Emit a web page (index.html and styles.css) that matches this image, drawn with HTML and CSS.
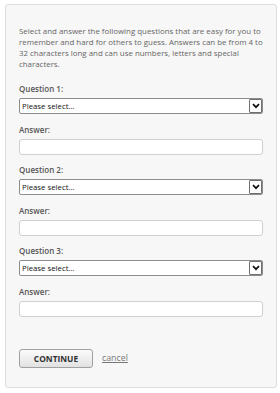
FILE: index.html
```html
<!DOCTYPE html>
<html lang="en">
<head>
  <meta charset="UTF-8">
  <title>Security Questions</title>
  <link rel="stylesheet" href="styles.css">
</head>
<body>
  <div class="panel">
    <p class="intro">Select and answer the following questions that are easy for you to remember and hard for others to guess. Answers can be from 4 to 32 characters long and can use numbers, letters and special characters.</p>

    <div class="group">
      <label class="label">Question 1:</label>
      <div class="select-wrap">
        <select class="select"><option>Please select...</option></select>
        <span class="arrow"><svg width="8" height="6" viewBox="0 0 8 6"><path d="M1 1.2l3 3 3-3" fill="none" stroke="#111" stroke-width="1.7"/></svg></span>
      </div>
      <label class="label">Answer:</label>
      <input class="answer" type="text">
    </div>

    <div class="group">
      <label class="label">Question 2:</label>
      <div class="select-wrap">
        <select class="select"><option>Please select...</option></select>
        <span class="arrow"><svg width="8" height="6" viewBox="0 0 8 6"><path d="M1 1.2l3 3 3-3" fill="none" stroke="#111" stroke-width="1.7"/></svg></span>
      </div>
      <label class="label">Answer:</label>
      <input class="answer" type="text">
    </div>

    <div class="group">
      <label class="label">Question 3:</label>
      <div class="select-wrap">
        <select class="select"><option>Please select...</option></select>
        <span class="arrow"><svg width="8" height="6" viewBox="0 0 8 6"><path d="M1 1.2l3 3 3-3" fill="none" stroke="#111" stroke-width="1.7"/></svg></span>
      </div>
      <label class="label">Answer:</label>
      <input class="answer" type="text">
    </div>

    <div class="actions">
      <button class="btn">CONTINUE</button>
      <a class="cancel" href="#">cancel</a>
    </div>
  </div>
</body>
</html>
```

FILE: styles.css
```css
body {
  margin: 0;
  padding: 4px 3px 6px 5px;
  font-family: "Open Sans", Arial, sans-serif;
  background: #fff;
}
.panel {
  background: #f7f7f7;
  border: 1px solid #dcdcdc;
  border-radius: 3px;
  padding: 21px 13px 19px 13px;
}
.intro {
  margin: 0 0 13px;
  font-size: 7.9px;
  line-height: 11px;
  color: #666;
}
.group {
  display: flex;
  flex-direction: column;
}
.label {
  font-size: 8px;
  font-weight: 600;
  color: #555;
  line-height: 11px;
  margin: 0 0 4px;
}
.select-wrap {
  position: relative;
  height: 16px;
  margin-bottom: 9.5px;
}
.select {
  display: block;
  box-sizing: border-box;
  -webkit-appearance: none;
  appearance: none;
  width: 100%;
  height: 16px;
  margin: 0;
  padding: 0 0 0 2px;
  border: 1px solid #8c8c8c;
  border-radius: 2px;
  background: #fff;
  font-family: "Open Sans", Arial, sans-serif;
  font-size: 7.8px;
  color: #111;
}
.arrow {
  position: absolute;
  top: 1px;
  right: 1px;
  box-sizing: border-box;
  width: 13px;
  height: 14px;
  border: 1px solid #6f6f6f;
  border-radius: 1px;
  background: #fff;
  display: flex;
  align-items: center;
  justify-content: center;
}
.answer {
  display: block;
  box-sizing: border-box;
  width: 100%;
  height: 16px;
  margin: 0 0 9.5px;
  border: 1px solid #cfcfcf;
  border-radius: 3px;
  background: #fff;
}
.actions {
  display: flex;
  align-items: center;
  gap: 9px;
  margin-top: 22.5px;
}
.btn {
  width: 74px;
  height: 19px;
  padding: 0;
  border: 1px solid #a0a0a0;
  border-radius: 3px;
  background: linear-gradient(#fbfbfb, #e2e2e2);
  font-family: "Open Sans", Arial, sans-serif;
  font-size: 8.4px;
  font-weight: 700;
  color: #333;
}
.cancel {
  font-size: 8.8px;
  color: #777;
}
```
